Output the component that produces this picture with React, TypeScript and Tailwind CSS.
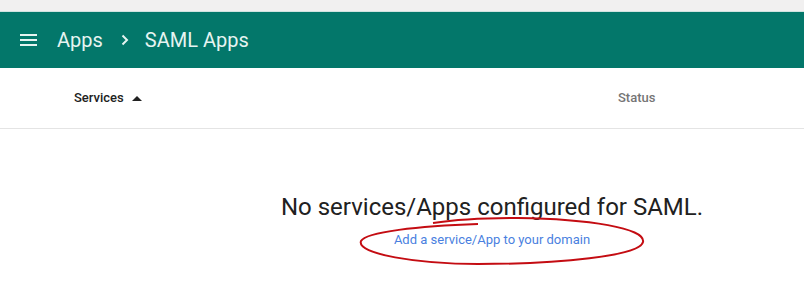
import React from "react";

export default function App() {
  return (
    <div className="w-[804px] h-[301px] bg-white overflow-hidden" style={{ fontFamily: "Roboto, 'Liberation Sans', sans-serif" }}>
      <div className="h-[12px] bg-[#f1f0f0] border-b border-[#cfe3e0]" />
      <div className="h-[56px] bg-[#03776a] flex items-center text-[#e6f4f1]">
        <div className="w-[57px] flex justify-center pl-[4px] pr-[4px]">
          <svg width="18" height="14" viewBox="0 0 18 14">
            <rect x="0" y="1" width="17" height="2" fill="#e6f4f1" />
            <rect x="0" y="6" width="17" height="2" fill="#e6f4f1" />
            <rect x="0" y="11" width="17" height="2" fill="#e6f4f1" />
          </svg>
        </div>
        <span className="text-[20px] leading-none">Apps</span>
        <svg className="ml-[18px] mr-[16px]" width="8" height="12" viewBox="0 0 8 12">
          <path d="M1.5 1.5 L6 6 L1.5 10.5" stroke="#e6f4f1" strokeWidth="2" fill="none" />
        </svg>
        <span className="text-[20px] leading-none">SAML Apps</span>
      </div>
      <div className="h-[61px] flex items-center border-b border-[#e4e4e4]">
        <div className="pl-[74px] w-[618px] flex items-center">
          <span className="text-[13px] font-medium text-[#212121]">Services</span>
          <svg className="ml-[8px]" width="10" height="7" viewBox="0 0 10 7">
            <path d="M0 6 L5 1 L10 6 Z" fill="#212121" />
          </svg>
        </div>
        <span className="text-[13px] font-medium text-[#757575]">Status</span>
      </div>
      <div className="relative flex flex-col items-center pt-[64px] pl-[180px]">
        <div className="text-[24px] leading-[28px] text-[#212121]">No services/Apps configured for SAML.</div>
        <div className="text-[13px] leading-[18px] text-[#4a7fe0] mt-[10px]">Add a service/App to your domain</div>
        <svg className="absolute left-[358px] top-[87px]" width="292" height="54" viewBox="0 0 292 54">
          <path
            d="M120 8 C 60 10, 8 16, 3 25 C -2 38, 60 48, 120 48 C 200 48, 282 40, 285 26 C 288 12, 230 3, 160 2 C 120 2, 95 4, 75 7"
            stroke="#c40c12"
            strokeWidth="2"
            fill="none"
          />
        </svg>
      </div>
    </div>
  );
}
